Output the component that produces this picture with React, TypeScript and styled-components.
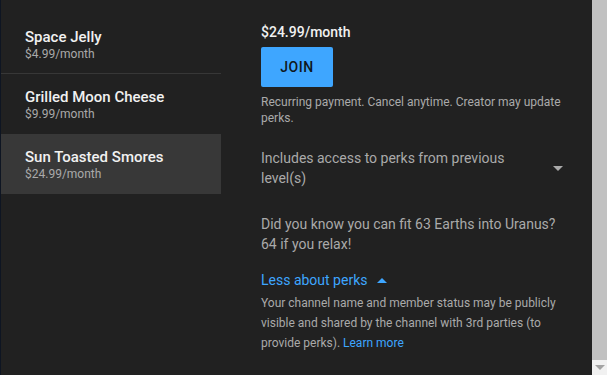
import React from 'react';
import styled, { createGlobalStyle } from 'styled-components';

const GlobalStyle = createGlobalStyle`
  html, body {
    margin: 0;
    padding: 0;
    background: #212121;
    font-family: Roboto, "Liberation Sans", Arial, sans-serif;
    overflow: hidden;
  }
`;

interface Tier {
  name: string;
  price: string;
}

const tiers: Tier[] = [
  { name: 'Space Jelly', price: '$4.99/month' },
  { name: 'Grilled Moon Cheese', price: '$9.99/month' },
  { name: 'Sun Toasted Smores', price: '$24.99/month' },
];

const Frame = styled.div`
  display: flex;
  height: 375px;
  width: 607px;
  background: #212121;
  border-left: 1px solid #0e1522;
  box-sizing: border-box;
`;

const Sidebar = styled.div`
  width: 220px;
  flex-shrink: 0;
  padding-top: 14px;
`;

const TierItem = styled.div<{ $selected?: boolean; $divider?: boolean }>`
  height: 60px;
  box-sizing: border-box;
  padding-left: 24px;
  padding-top: 2px;
  display: flex;
  flex-direction: column;
  justify-content: center;
  background: ${(p) => (p.$selected ? '#383838' : 'transparent')};
  border-bottom: 1px solid ${(p) => (p.$divider ? '#373737' : 'transparent')};
`;

const TierName = styled.div`
  color: #f1f1f1;
  font-size: 15px;
  font-weight: 500;
  line-height: 18px;
`;

const TierPrice = styled.div`
  color: #aaaaaa;
  font-size: 12px;
  line-height: 16px;
`;

const Panel = styled.div`
  flex: 1;
  padding: 23px 24px 0 40px;
  display: flex;
  flex-direction: column;
`;

const Price = styled.div`
  color: #f1f1f1;
  font-size: 14px;
  font-weight: 500;
  line-height: 18px;
`;

const JoinButton = styled.button`
  margin-top: 6px;
  width: 72px;
  height: 40px;
  border: none;
  border-radius: 2px;
  background: #3ea6ff;
  color: #0f1720;
  font-family: inherit;
  font-size: 14px;
  font-weight: 500;
  letter-spacing: 0.6px;
  padding: 0;
`;

const Note = styled.div`
  margin-top: 7px;
  color: #aaaaaa;
  font-size: 12px;
  line-height: 16px;
`;

const PerksRow = styled.div`
  margin-top: 22px;
  display: flex;
  align-items: flex-start;
  justify-content: space-between;
`;

const Body = styled.div<{ $width?: string }>`
  color: #aaaaaa;
  font-size: 14px;
  line-height: 20px;
  width: ${(p) => p.$width || 'auto'};
`;

const Caret = styled.span<{ $up?: boolean; $color: string }>`
  display: inline-block;
  width: 0;
  height: 0;
  border-left: 5px solid transparent;
  border-right: 5px solid transparent;
  ${(p) =>
    p.$up
      ? `border-bottom: 5px solid ${p.$color};`
      : `border-top: 5px solid ${p.$color};`}
`;

const DropCaret = styled.div`
  padding-top: 8px;
  padding-right: 5px;
`;

const Fact = styled(Body)`
  margin-top: 26px;
`;

const LessLink = styled.div`
  margin-top: 16px;
  color: #3ea6ff;
  font-size: 14px;
  line-height: 20px;
  display: flex;
  align-items: center;
  gap: 10px;
`;

const Disclosure = styled.div`
  margin-top: 3px;
  color: #aaaaaa;
  font-size: 12px;
  line-height: 20px;
`;

const Link = styled.span`
  color: #3ea6ff;
`;

const Scrollbar = styled.div`
  width: 15px;
  flex-shrink: 0;
  background: #f1f1f1;
  display: flex;
  flex-direction: column;
`;

const Thumb = styled.div`
  flex: 1;
  background: #c1c1c1;
`;

const ArrowButton = styled.div`
  height: 15px;
  display: flex;
  align-items: center;
  justify-content: center;
`;

export default function App() {
  return (
    <>
      <GlobalStyle />
      <Frame>
        <Sidebar>
          {tiers.map((t, i) => (
            <TierItem key={t.name} $selected={i === 2} $divider={i === 0}>
              <TierName>{t.name}</TierName>
              <TierPrice>{t.price}</TierPrice>
            </TierItem>
          ))}
        </Sidebar>
        <Panel>
          <Price>$24.99/month</Price>
          <JoinButton>JOIN</JoinButton>
          <Note>Recurring payment. Cancel anytime. Creator may update perks.</Note>
          <PerksRow>
            <Body $width="270px">Includes access to perks from previous level(s)</Body>
            <DropCaret>
              <Caret $color="#aaaaaa" />
            </DropCaret>
          </PerksRow>
          <Fact>Did you know you can fit 63 Earths into Uranus? 64 if you relax!</Fact>
          <LessLink>
            Less about perks
            <Caret $up $color="#3ea6ff" />
          </LessLink>
          <Disclosure>
            Your channel name and member status may be publicly visible and shared by the
            channel with 3rd parties (to provide perks). <Link>Learn more</Link>
          </Disclosure>
        </Panel>
        <Scrollbar>
          <Thumb />
          <ArrowButton>
            <Caret $color="#a3a3a3" />
          </ArrowButton>
        </Scrollbar>
      </Frame>
    </>
  );
}
